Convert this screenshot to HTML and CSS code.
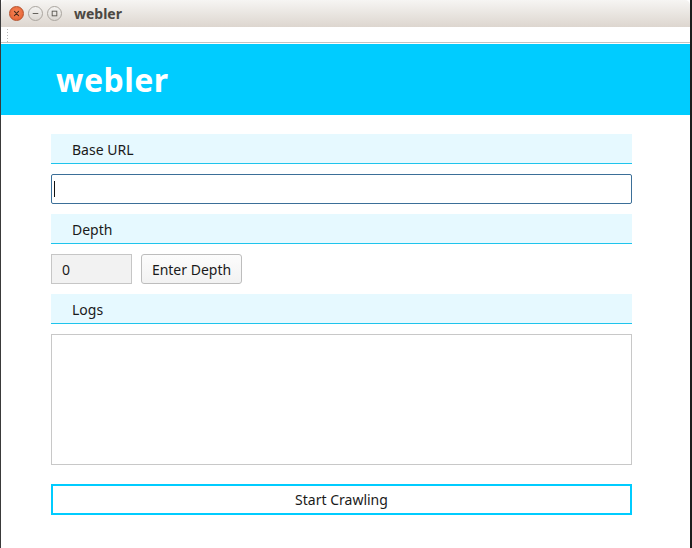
FILE: index.html
```html
<!DOCTYPE html>
<html>
<head>
<meta charset="utf-8">
<link rel="stylesheet" href="styles.css">
</head>
<body>
<div class="window">
  <div class="titlebar">
    <div class="controls">
      <span class="btn close">
        <svg width="14" height="14" viewBox="0 0 14 14"><path d="M4.8 4.8 L9.2 9.2 M9.2 4.8 L4.8 9.2" stroke="#4a2a1a" stroke-width="1.2" stroke-linecap="round"/></svg>
      </span>
      <span class="btn">
        <svg width="14" height="14" viewBox="0 0 14 14"><path d="M4 7 H10" stroke="#5a5752" stroke-width="1"/></svg>
      </span>
      <span class="btn">
        <svg width="14" height="14" viewBox="0 0 14 14"><rect x="4.5" y="4.5" width="5" height="5" fill="none" stroke="#5a5752" stroke-width="1"/></svg>
      </span>
    </div>
    <div class="title">webler</div>
  </div>
  <div class="toolbar"><span class="grip"></span></div>
  <div class="app">
    <header class="hero"><h1>webler</h1></header>
    <main class="content">
      <div class="section-head">Base URL</div>
      <div class="url-input"><span class="caret"></span></div>
      <div class="section-head">Depth</div>
      <div class="depth-row">
        <div class="depth-input">0</div>
        <button class="depth-btn">Enter Depth</button>
      </div>
      <div class="section-head">Logs</div>
      <div class="logs"></div>
      <button class="start">Start Crawling</button>
    </main>
  </div>
</div>
</body>
</html>
```

FILE: styles.css
```css
* { box-sizing: border-box; }
html, body { margin: 0; padding: 0; background: #fff; }
body {
  width: 692px;
  height: 548px;
  overflow: hidden;
  font-family: "Noto Sans", "Open Sans", sans-serif;
  color: #1a1a1a;
}
.window {
  width: 692px;
  height: 548px;
  border-right: 2px solid #1b1b1b;
  border-left: 1px solid #3a3a3a;
  display: flex;
  flex-direction: column;
  background: #fff;
}
.titlebar {
  height: 27px;
  flex: none;
  display: flex;
  align-items: center;
  background: linear-gradient(#f6f5f3, #ddd6cf);
  border-radius: 5px 5px 0 0;
  padding-left: 8px;
}
.controls { display: flex; gap: 4px; }
.btn {
  width: 15px;
  height: 15px;
  border-radius: 50%;
  background: linear-gradient(#f4f3f1, #dcd8d3);
  border: 1px solid #aaa59f;
  display: flex;
  align-items: center;
  justify-content: center;
}
.btn svg { width: 13px; height: 13px; }
.btn.close {
  background: radial-gradient(circle at 50% 40%, #f7875a, #e15a2a);
  border-color: #b5502b;
}
.title {
  margin-left: 12px;
  font-family: "Noto Sans", sans-serif;
  font-weight: bold;
  font-size: 14px;
  color: #4c4843;
}
.toolbar {
  height: 16px;
  flex: none;
  border-bottom: 1px solid #c4c4c4;
  position: relative;
}
.grip {
  position: absolute;
  left: 5px;
  top: 1px;
  width: 3px;
  height: 14px;
  background-image: radial-gradient(circle, #b8b8b8 0.8px, transparent 1px);
  background-size: 3px 3px;
}
.app { flex: 1; padding-top: 1px; }
.hero {
  height: 71px;
  background: #00ccff;
  padding-left: 55px;
  display: flex;
  align-items: center;
}
.hero h1 {
  margin: 0;
  color: #fff;
  font-size: 32px;
  font-weight: bold;
  letter-spacing: 0.5px;
}
.content {
  width: 581px;
  margin: 19px 0 0 50px;
  display: flex;
  flex-direction: column;
  gap: 10px;
}
.section-head {
  height: 30px;
  background: #e6f9ff;
  border-bottom: 1px solid #1ec4ec;
  padding: 2px 0 0 21px;
  font-size: 14px;
  display: flex;
  align-items: center;
}
.url-input {
  height: 30px;
  border: 1px solid #3b6f98;
  border-radius: 2px;
  display: flex;
  align-items: center;
  padding-left: 2px;
}
.caret { width: 1px; height: 16px; background: #111; }
.depth-row { display: flex; gap: 9px; height: 30px; }
.depth-input {
  width: 81px;
  border: 1px solid #c6c6c6;
  background: #f2f2f2;
  font-size: 14px;
  padding-left: 10px;
  display: flex;
  align-items: center;
}
.depth-btn {
  width: 101px;
  border: 1px solid #bdbdbd;
  border-radius: 3px;
  background: linear-gradient(#fcfcfc, #f2f2f2);
  font-family: inherit;
  font-size: 14px;
  color: #1a1a1a;
  padding: 0;
}
.logs {
  height: 131px;
  border: 1px solid #c8c8c8;
}
.start {
  margin-top: 9px;
  height: 31px;
  border: 2px solid #00ccff;
  background: #fff;
  font-family: inherit;
  font-size: 14px;
  color: #1a1a1a;
  padding: 0;
}
```
